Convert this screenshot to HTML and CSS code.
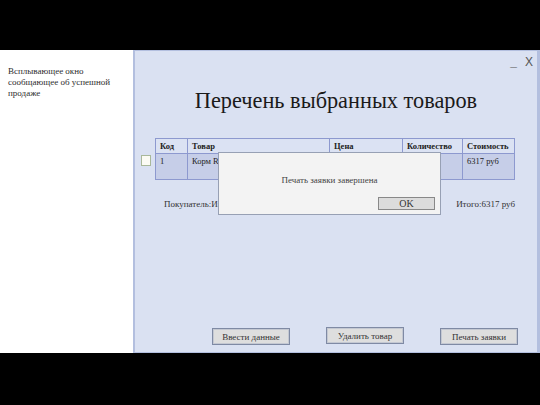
FILE: index.html
```html
<!DOCTYPE html>
<html lang="ru">
<head>
<meta charset="utf-8">
<link rel="stylesheet" href="styles.css">
</head>
<body>
<div class="top-band"></div>
<div class="main">
  <aside class="note">Всплывающее окно сообщающее об успешной продаже</aside>
  <section class="window">
    <div class="controls"><span class="min">_</span><span class="close">X</span></div>
    <h1 class="title">Перечень выбранных товаров</h1>
    <div class="table-row">
      <div class="check-col"><span class="checkbox"></span></div>
      <table class="goods">
        <colgroup><col class="c1"><col class="c2"><col class="c3"><col class="c4"><col class="c5"></colgroup>
        <thead>
          <tr><th>Код</th><th>Товар</th><th>Цена</th><th>Количество</th><th>Стоимость</th></tr>
        </thead>
        <tbody>
          <tr><td>1</td><td>Корм Royal Canin</td><td>6317 руб</td><td>1</td><td>6317 руб</td></tr>
        </tbody>
      </table>
    </div>
    <div class="summary"><span>Покупатель:Иванов Иван</span><span>Итого:6317 руб</span></div>
    <div class="actions">
      <button class="btn">Ввести данные</button>
      <button class="btn btn-up">Удалить товар</button>
      <button class="btn">Печать заявки</button>
    </div>
    <div class="dialog">
      <p class="dialog-text">Печать заявки завершена</p>
      <div class="dialog-actions"><button class="ok">OK</button></div>
    </div>
  </section>
</div>
<div class="bottom-band"></div>
</body>
</html>
```
FILE: styles.css
```css
html, body {
  margin: 0;
  padding: 0;
  background: #000;
  width: 540px;
  height: 405px;
  overflow: hidden;
  font-family: "Liberation Serif", "Times New Roman", serif;
}
.top-band { height: 50px; }
.main {
  display: flex;
  height: 303px;
}
.note {
  width: 125px;
  background: #fff;
  padding: 16px 0 0 8px;
  font-family: "Liberation Serif", "Times New Roman", serif;
  font-size: 9px;
  line-height: 11px;
  color: #2e2e2e;
}
.window {
  position: relative;
  flex: 1;
  background: #dae1f2;
  border: 1px solid #b3bfdf;
  border-left-width: 2px;
  border-right-width: 3px;
  display: flex;
  flex-direction: column;
}
.controls {
  display: flex;
  justify-content: flex-end;
  align-items: flex-end;
  gap: 8px;
  height: 14px;
  padding: 3px 4px 0 0;
  font-family: "Liberation Sans", Arial, sans-serif;
  color: #555;
  font-size: 12px;
  line-height: 12px;
}
.min { font-weight: bold; }
.title {
  margin: 20px 0 0;
  text-align: center;
  font-weight: normal;
  font-size: 22.3px;
  line-height: 26px;
  color: #1a1a1a;
}
.table-row {
  display: flex;
  margin-top: 24px;
}
.check-col {
  width: 20px;
  padding: 17px 0 0 6px;
  box-sizing: border-box;
}
.checkbox {
  display: block;
  width: 8px;
  height: 9px;
  background: #fbfbf4;
  border: 1px solid #a9b89a;
}
.goods {
  border-collapse: collapse;
  table-layout: fixed;
  width: 359px;
  font-size: 8.5px;
  color: #222;
}
.goods th, .goods td {
  border: 1px solid #8d99cf;
  text-align: left;
  vertical-align: top;
  padding: 2px 4px 0;
  white-space: nowrap;
  overflow: hidden;
}
.goods th { height: 12px; font-weight: bold; background: #dbe2f3; }
.goods td { height: 23px; background: #c6cee8; }
.c1 { width: 32px; }
.c2 { width: 142px; }
.c3 { width: 73px; }
.c4 { width: 60px; }
.c5 { width: 52px; }
.summary {
  display: flex;
  justify-content: space-between;
  margin: 18px 0 0;
  padding: 0 22px 0 29px;
  font-size: 9px;
  line-height: 12px;
  color: #333;
}
.actions {
  display: flex;
  gap: 36px;
  margin-top: auto;
  padding: 0 0 7px 77px;
  align-items: flex-end;
}
.btn {
  width: 78px;
  height: 17px;
  padding: 0;
  background: #dedede;
  border: 1px solid #7f8aa4;
  box-shadow: inset 0 0 0 1px #c4c8d2;
  font-family: "Liberation Serif", "Times New Roman", serif;
  font-size: 9px;
  color: #333;
}
.btn-up { margin-bottom: 1px; }
.dialog {
  position: absolute;
  left: 83px;
  top: 101px;
  width: 221px;
  height: 61px;
  background: #f3f3f3;
  border: 1px solid #97a0b4;
  display: flex;
  flex-direction: column;
}
.dialog-text {
  margin: 21px 0 0;
  text-align: center;
  font-size: 9px;
  line-height: 12px;
  color: #444;
}
.dialog-actions {
  display: flex;
  justify-content: flex-end;
  padding: 11px 5px 0 0;
}
.ok {
  width: 57px;
  height: 13px;
  padding: 0;
  background: #dcdcdc;
  border: 1px solid #888;
  font-family: "Liberation Serif", "Times New Roman", serif;
  font-size: 10px;
  line-height: 11px;
  color: #333;
}
```
